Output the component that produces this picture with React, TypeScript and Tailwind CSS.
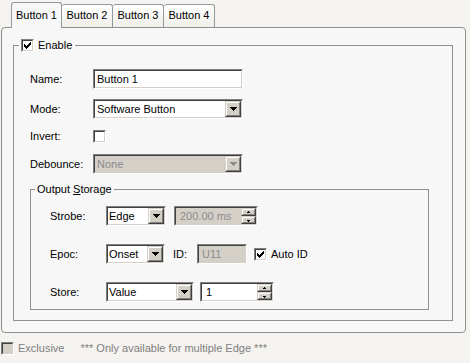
import React from "react";

function Arrow({ gray = false }: { gray?: boolean }) {
  const fill = gray ? "#8c8c8c" : "#000";
  return (
    <svg width="7" height="4" viewBox="0 0 7 4" shapeRendering="crispEdges">
      <rect x="0" y="0" width="7" height="1" fill={fill} />
      <rect x="1" y="1" width="5" height="1" fill={fill} />
      <rect x="2" y="2" width="3" height="1" fill={fill} />
      <rect x="3" y="3" width="1" height="1" fill={fill} />
    </svg>
  );
}

function SmallArrow({ up }: { up: boolean }) {
  return (
    <svg width="5" height="3" viewBox="0 0 5 3" shapeRendering="crispEdges">
      {up ? (
        <>
          <rect x="2" y="0" width="1" height="1" fill="#000" />
          <rect x="1" y="1" width="3" height="1" fill="#000" />
        </>
      ) : (
        <>
          <rect x="1" y="1" width="3" height="1" fill="#000" />
          <rect x="2" y="2" width="1" height="1" fill="#000" />
        </>
      )}
    </svg>
  );
}

function Check() {
  const tops = [2, 3, 4, 3, 2, 1, 0];
  return (
    <svg width="7" height="7" viewBox="0 0 7 7" shapeRendering="crispEdges">
      {tops.map((t, i) => (
        <rect key={i} x={i} y={t} width="1" height="3" fill="#000" />
      ))}
    </svg>
  );
}

function CheckBox({ checked = false, disabled = false }: { checked?: boolean; disabled?: boolean }) {
  return (
    <div className="w-[13px] h-[13px] shrink-0 border border-t-[#808080] border-l-[#808080] border-b-white border-r-white">
      <div
        className={`w-full h-full border border-t-[#404040] border-l-[#404040] border-b-[#d4d0c8] border-r-[#d4d0c8] flex items-center justify-center ${
          disabled ? "bg-[#d4d0c8]" : "bg-white"
        }`}
      >
        {checked && <Check />}
      </div>
    </div>
  );
}

function RaisedBtn({ children, className }: { children?: React.ReactNode; className: string }) {
  return (
    <div className={`border border-t-[#d4d0c8] border-l-[#d4d0c8] border-b-[#404040] border-r-[#404040] ${className}`}>
      <div className="w-full h-full border border-t-white border-l-white border-b-[#808080] border-r-[#808080] bg-[#d4d0c8] flex items-center justify-center">
        {children}
      </div>
    </div>
  );
}

function Field({
  width,
  text,
  disabled = false,
  kind = "text",
  pad = "pl-[2px]",
}: {
  width: string;
  text: string;
  disabled?: boolean;
  kind?: "text" | "combo" | "spin";
  pad?: string;
}) {
  return (
    <div className={`h-[20px] shrink-0 border border-t-[#808080] border-l-[#808080] border-b-white border-r-white ${width}`}>
      <div
        className={`w-full h-full border border-t-[#404040] border-l-[#404040] border-b-[#d4d0c8] border-r-[#d4d0c8] flex items-center ${
          disabled ? "bg-[#d4d0c8] text-[#8c8c8c]" : "bg-white text-black"
        }`}
      >
        <span className={`flex-1 whitespace-nowrap overflow-hidden ${pad}`}>{text}</span>
        {kind === "combo" && (
          <RaisedBtn className="w-[16px] h-[16px] shrink-0">
            <Arrow gray={disabled} />
          </RaisedBtn>
        )}
        {kind === "spin" && (
          <div className="flex flex-col w-[15px] h-[16px] shrink-0">
            <RaisedBtn className="w-[15px] h-[8px]">
              <SmallArrow up />
            </RaisedBtn>
            <RaisedBtn className="w-[15px] h-[8px]">
              <SmallArrow up={false} />
            </RaisedBtn>
          </div>
        )}
      </div>
    </div>
  );
}

function Tab({ label, selected = false }: { label: string; selected?: boolean }) {
  return selected ? (
    <div className="w-[51px] h-[26px] -mb-[1px] border border-b-0 border-[#919b9c] rounded-t-[3px] bg-[#f7f7f7] flex justify-center pt-[6px] shrink-0">
      {label}
    </div>
  ) : (
    <div className="w-[51px] h-[23px] border border-b-0 border-l-0 border-[#919b9c] rounded-t-[3px] bg-gradient-to-b from-white to-[#efeee9] flex justify-center pt-[4px] shrink-0">
      {label}
    </div>
  );
}

export default function App() {
  return (
    <div className="w-[470px] h-[363px] bg-[#f5f3ef] text-[11px] leading-[13px] text-black font-['Liberation_Sans',Arial,sans-serif] overflow-hidden">
      <div className="relative z-10 flex items-end h-[27px] pl-[11px]">
        <Tab label="Button 1" selected />
        <Tab label="Button 2" />
        <Tab label="Button 3" />
        <Tab label="Button 4" />
      </div>
      <div className="ml-[1px] w-[465px] h-[306px] border border-[#8f8f8f] rounded-[4px] bg-[#f7f7f7] pt-[11px] pl-[11px]">
        <fieldset className="w-[440px] h-[282px] border border-[#8f8f8f] p-0 m-0">
          <legend className="ml-[5px] px-[2px] flex items-center h-[13px]">
            <CheckBox checked />
            <span className="ml-[4px] pr-[1px]">Enable</span>
          </legend>
          <div className="pl-[16px] pt-[17px]">
            <div className="flex items-center h-[20px]">
              <span className="w-[63px]">Name:</span>
              <Field width="w-[150px]" text="Button 1" />
            </div>
            <div className="flex items-center h-[20px] mt-[10px]">
              <span className="w-[63px]">Mode:</span>
              <Field width="w-[150px]" text="Software Button" kind="combo" />
            </div>
            <div className="flex items-center h-[13px] mt-[11px]">
              <span className="w-[63px]">Invert:</span>
              <CheckBox />
            </div>
            <div className="flex items-center h-[20px] mt-[11px]">
              <span className="w-[63px]">Debounce:</span>
              <Field width="w-[150px]" text="None" kind="combo" disabled />
            </div>
            <fieldset className="w-[399px] h-[127px] mt-[9px] border border-[#8f8f8f] p-0 m-0">
              <legend className="ml-[4px] px-[2px] h-[13px]">
                Output <span className="underline">S</span>torage
              </legend>
              <div className="pl-[19px] pt-[10px]">
                <div className="flex items-center h-[20px]">
                  <span className="w-[56px]">Strobe:</span>
                  <Field width="w-[60px]" text="Edge" kind="combo" pad="pl-[1px]" />
                  <div className="ml-[8px]">
                    <Field width="w-[84px]" text="200.00 ms" kind="spin" disabled pad="pl-[4px]" />
                  </div>
                </div>
                <div className="flex items-center h-[20px] mt-[18px]">
                  <span className="w-[56px]">Epoc:</span>
                  <Field width="w-[59px]" text="Onset" kind="combo" pad="pl-[1px]" />
                  <span className="ml-[8px] w-[24px]">ID:</span>
                  <Field width="w-[50px]" text="U11" disabled pad="pl-[3px]" />
                  <div className="ml-[7px]">
                    <CheckBox checked />
                  </div>
                  <span className="ml-[4px]">Auto ID</span>
                </div>
                <div className="flex items-center h-[20px] mt-[18px]">
                  <span className="w-[56px]">Store:</span>
                  <Field width="w-[88px]" text="Value" kind="combo" pad="pl-[1px]" />
                  <div className="ml-[6px]">
                    <Field width="w-[74px]" text="1" kind="spin" pad="pl-[4px]" />
                  </div>
                </div>
              </div>
            </fieldset>
          </div>
        </fieldset>
      </div>
      <div className="flex items-center h-[13px] mt-[9px] ml-[1px] text-[#808080]">
        <CheckBox disabled />
        <span className="ml-[4px]">Exclusive</span>
        <span className="ml-[16px]">*** Only available for multiple Edge ***</span>
      </div>
    </div>
  );
}
